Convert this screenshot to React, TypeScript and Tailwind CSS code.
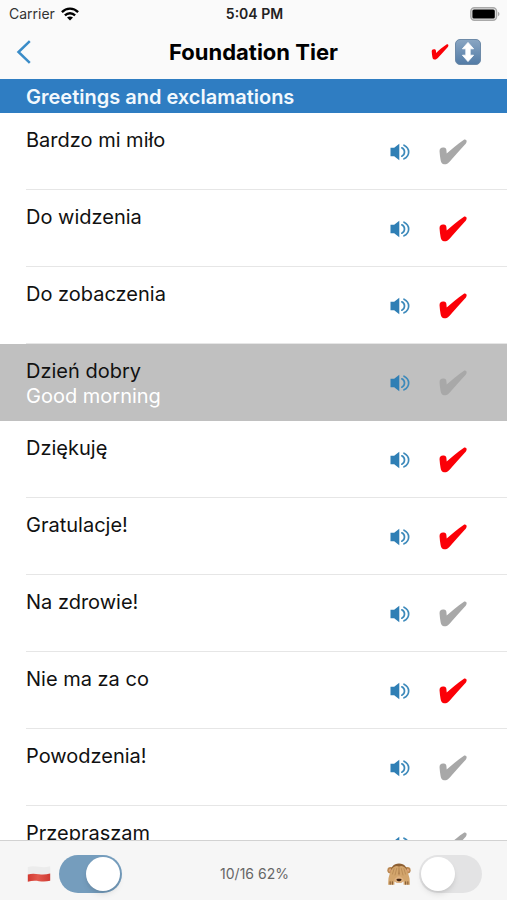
import React, { useState } from 'react';

interface Phrase {
  id: number;
  polish: string;
  english: string;
  learned: boolean;
}

const PHRASES: Phrase[] = [
  { id: 1, polish: 'Bardzo mi miło', english: 'Nice to meet you', learned: false },
  { id: 2, polish: 'Do widzenia', english: 'Goodbye', learned: true },
  { id: 3, polish: 'Do zobaczenia', english: 'See you', learned: true },
  { id: 4, polish: 'Dzień dobry', english: 'Good morning', learned: false },
  { id: 5, polish: 'Dziękuję', english: 'Thank you', learned: true },
  { id: 6, polish: 'Gratulacje!', english: 'Congratulations!', learned: true },
  { id: 7, polish: 'Na zdrowie!', english: 'Cheers!', learned: false },
  { id: 8, polish: 'Nie ma za co', english: "You're welcome", learned: true },
  { id: 9, polish: 'Powodzenia!', english: 'Good luck!', learned: false },
  { id: 10, polish: 'Przepraszam', english: 'Sorry', learned: false },
];

const CheckMark: React.FC<{ className: string }> = ({ className }) => (
  <svg viewBox="0 0 28 26" className={className} fill="currentColor" aria-hidden="true">
    <path d="M0.600 13C0.300 9.800 1.500 8.800 4 8.500C6.200 8.200 7.200 9 7.400 11L7.700 14.600C12.500 10 18.500 5 24.600 0.900C26.200 -0.100 27.900 1 27.600 2.800C27.400 4 26.800 4.800 26 5.600C20.800 11 15.800 17 10.800 22.400C8.800 24.700 6.800 25.600 4.800 25.200C2.700 24.800 2 23.200 1.600 21C1.100 18.400 0.800 15.600 0.600 13Z" />
  </svg>
);

const SpeakerIcon = () => (
  <svg viewBox="0 0 20 18" className="h-[18px] w-5" aria-hidden="true">
    <path d="M0.500 4.800H4.200L9.300 0.700V17.300L4.200 13.200H0.500Z" fill="#2f7fb5" />
    <g fill="none" stroke="#3d8abb" strokeWidth="1.700" strokeLinecap="round">
      <path d="M11.800 4.800C15.400 6.500 15.400 11.500 11.800 13.200" />
      <path d="M14 2.200C20.200 5.200 20.200 12.800 14 15.800" />
    </g>
  </svg>
);

const WifiIcon = () => (
  <svg viewBox="0 0 18 14" className="h-[14px] w-[18px]" aria-hidden="true">
    <g fill="none" stroke="#000" strokeWidth="2.300">
      <path d="M0.900 5.100C5.400 0.500 12.600 0.500 17.100 5.100" />
      <path d="M3.900 8.400C6.800 5.500 11.200 5.500 14.100 8.400" />
    </g>
    <path d="M6 10.600C7.700 9 10.300 9 12 10.600L9 13.600Z" />
  </svg>
);

const BatteryIcon = () => (
  <svg viewBox="0 0 30 14" className="h-[14px] w-[30px]" aria-hidden="true">
    <rect x="0.800" y="0.800" width="25.800" height="12.400" rx="3.600" fill="#e4e4e4" stroke="#a9a9a9" strokeWidth="1.400" />
    <rect x="2.400" y="2.400" width="22.400" height="9.200" rx="1.600" fill="#000" />
    <path d="M28 4.800C30 5.600 30 8.400 28 9.200Z" fill="#a9a9a9" />
  </svg>
);

const SortIcon = () => (
  <svg viewBox="0 0 26 26" className="size-[26px]" aria-hidden="true">
    <defs>
      <linearGradient id="sort-face" x1="0" y1="0" x2="0" y2="1">
        <stop offset="0" stopColor="#8aa6c3" />
        <stop offset="1" stopColor="#527ba6" />
      </linearGradient>
    </defs>
    <rect x="0.500" y="0.500" width="25" height="25" rx="4.500" fill="url(#sort-face)" stroke="#6d8aa8" />
    <path d="M13 3.400L18.600 9.800H15.200V16.200H18.600L13 22.600L7.400 16.200H10.800V9.800H7.400Z" fill="#fff" stroke="#fff" strokeWidth="0.800" strokeLinejoin="round" />
  </svg>
);

const PolishFlag = () => (
  <svg viewBox="0 0 24 18" className="h-[18px] w-6" aria-hidden="true">
    <defs>
      <linearGradient id="flag-red" x1="0" y1="0" x2="1" y2="0">
        <stop offset="0" stopColor="#d23a32" />
        <stop offset="0.450" stopColor="#e2584c" />
        <stop offset="1" stopColor="#cf3a33" />
      </linearGradient>
    </defs>
    <path d="M0.800 2C4.500 1 8 1.200 12 1.800C16 2.400 19.500 2.200 23.200 1.200V9.500H0.800Z" fill="#ececec" />
    <path d="M0.800 9.400C4.500 8.400 8 8.600 12 9.200C16 9.800 19.500 9.400 23.200 8.600V15.800C19.500 16.700 16 16.800 12 16.200C8 15.600 4.500 15.800 0.800 16.800Z" fill="url(#flag-red)" />
  </svg>
);

const MonkeyIcon = () => (
  <svg viewBox="0 0 26 26" className="size-6" aria-hidden="true">
    <circle cx="4" cy="9" r="3.600" fill="#b98750" />
    <circle cx="22" cy="9" r="3.600" fill="#b98750" />
    <circle cx="3.800" cy="9" r="1.800" fill="#e0a47c" />
    <circle cx="22.200" cy="9" r="1.800" fill="#e0a47c" />
    <path d="M13 1.500C19 1.500 22.500 6 22 12C21.800 18 18.500 22.500 13 22.500C7.500 22.500 4.200 18 4 12C3.500 6 7 1.500 13 1.500Z" fill="#8d6034" />
    <ellipse cx="13" cy="18" rx="6.500" ry="4.800" fill="#dfb281" />
    <path d="M10.200 18.600C12 18 14 18 15.800 18.600C15.600 21.500 10.400 21.500 10.200 18.600Z" fill="#3b2112" />
    <path d="M12.900 5C10.500 3 6.800 5 4.600 8.400C3.600 11 2.400 14.500 1.600 17.500L1.200 24.600H8V19.500C8.200 18.300 9 17.300 10 16.900C12 16.300 13 14.500 12.900 5Z" fill="#d3a56c" />
    <path d="M13.100 5C15.500 3 19.200 5 21.400 8.400C22.400 11 23.600 14.500 24.400 17.500L24.800 24.600H18V19.500C17.800 18.300 17 17.300 16 16.900C14 16.300 13 14.500 13.100 5Z" fill="#d3a56c" />
    <path d="M13 6V15.500M10.600 6.600L8.600 14.500M7.800 6.800L5.800 13.500M15.400 6.600L17.400 14.500M18.200 6.800L20.200 13.500" stroke="#a87a47" strokeWidth="0.600" fill="none" />
    <path d="M3.400 21V24.600M5.800 21V24.600M20.200 21V24.600M22.600 21V24.600" stroke="#6d4524" strokeWidth="0.900" />
  </svg>
);

interface SwitchProps {
  label: string;
  checked: boolean;
  onChange: (checked: boolean) => void;
  children: React.ReactNode;
}

const Switch: React.FC<SwitchProps> = ({ label, checked, onChange, children }) => (
  <label className="flex items-center gap-2">
    {children}
    <input
      type="checkbox"
      role="switch"
      aria-label={label}
      checked={checked}
      onChange={(e) => onChange(e.target.checked)}
      className="flex h-[38px] w-[63px] cursor-pointer appearance-none items-center rounded-full bg-[#e3e3e4] p-0.5 before:size-[34px] before:rounded-full before:bg-white before:shadow-md checked:justify-end checked:bg-[#759dbd]"
    />
  </label>
);

interface PhraseRowProps {
  phrase: Phrase;
  isSelected: boolean;
  onSelect: () => void;
  onToggle: () => void;
}

const PhraseRow: React.FC<PhraseRowProps> = ({ phrase, isSelected, onSelect, onToggle }) => {
  const checkColor = phrase.learned ? 'text-[#fb0007]' : 'text-[#a8a8a8]';

  return (
    <li className={isSelected ? 'bg-[#c0c0c0]' : 'bg-white'}>
      <div className={`ml-[26px] flex h-[77px] border-b pr-10 ${isSelected ? 'border-[#c0c0c0]' : 'border-[#e6e6e6]'}`}>
        <button type="button" onClick={onSelect} className="flex flex-1 flex-col items-start pt-[15px] text-left text-[20px] leading-[25px] text-[#111111]">
          {phrase.polish}
          {isSelected && <span className="text-white">{phrase.english}</span>}
        </button>
        <div className="flex items-center gap-[29px] pt-0.5">
          <button type="button" aria-label={`Play ${phrase.polish}`}>
            <SpeakerIcon />
          </button>
          <button type="button" aria-label={`Mark ${phrase.polish} as learned`} aria-pressed={phrase.learned} onClick={onToggle}>
            <CheckMark className={`h-[26px] w-7 ${checkColor}`} />
          </button>
        </div>
      </div>
    </li>
  );
};

const App: React.FC = () => {
  const [phrases, setPhrases] = useState<Phrase[]>(PHRASES);
  const [selectedId, setSelectedId] = useState<number | null>(4);
  const [showPolish, setShowPolish] = useState(true);
  const [hideLearned, setHideLearned] = useState(false);

  const handleToggle = (id: number) => {
    setPhrases(phrases.map(p => p.id === id ? { ...p, learned: !p.learned } : p));
  };

  return (
    <div className="flex h-screen flex-col bg-white font-['Inter','Liberation_Sans',sans-serif] text-black">
      <header className="bg-[#fafafa]">
        <div className="grid h-7 grid-cols-3 items-center pr-[7px] pl-[9px] text-[14px] leading-5">
          <div className="flex items-center gap-1.5 text-[#333333]">
            <span>Carrier</span>
            <WifiIcon />
          </div>
          <span className="text-center font-semibold text-[#222222]">5:04 PM</span>
          <div className="flex justify-end">
            <BatteryIcon />
          </div>
        </div>
        <div className="grid h-[51px] grid-cols-[1fr_auto_1fr] items-center pb-[3px]">
          <div className="flex pl-4">
            <button type="button" aria-label="Back">
              <svg viewBox="0 0 16 24" className="h-6 w-4" fill="none" stroke="#3a8cc8" strokeWidth="2.500" aria-hidden="true">
                <path d="M13.800 1.200L2.500 12L13.800 22.800" />
              </svg>
            </button>
          </div>
          <h1 className="text-[22px] leading-7 font-bold">Foundation Tier</h1>
          <div className="flex items-center justify-end gap-1.5 pr-[26px]">
            <button type="button" aria-label="Filter learned">
              <CheckMark className="h-4 w-[18px] text-[#fb0007]" />
            </button>
            <button type="button" aria-label="Sort">
              <SortIcon />
            </button>
          </div>
        </div>
      </header>

      <main className="min-h-0 flex-1 overflow-y-auto [scrollbar-width:none]">
        <h2 className="h-[34px] bg-[#2f7dc2] pl-[26px] text-[20px] leading-9 font-semibold text-[#f2f8fd]">Greetings and exclamations</h2>
        <ul>
          {phrases.map(phrase => (
            <PhraseRow
              key={phrase.id}
              phrase={phrase}
              isSelected={phrase.id === selectedId}
              onSelect={() => setSelectedId(phrase.id === selectedId ? null : phrase.id)}
              onToggle={() => handleToggle(phrase.id)}
            />
          ))}
        </ul>
      </main>

      <footer className="grid h-[60px] grid-cols-[1fr_auto_1fr] items-center border-t border-[#d2d2d2] bg-[#f6f6f6] pt-1.5 pr-[25px] pl-[27px]">
        <Switch label="Show Polish" checked={showPolish} onChange={setShowPolish}>
          <PolishFlag />
        </Switch>
        <span className="text-[14px] leading-5 text-[#666666]">10/16 62%</span>
        <div className="flex justify-end">
          <Switch label="Hide learned" checked={hideLearned} onChange={setHideLearned}>
            <MonkeyIcon />
          </Switch>
        </div>
      </footer>
    </div>
  );
};

export default App;
